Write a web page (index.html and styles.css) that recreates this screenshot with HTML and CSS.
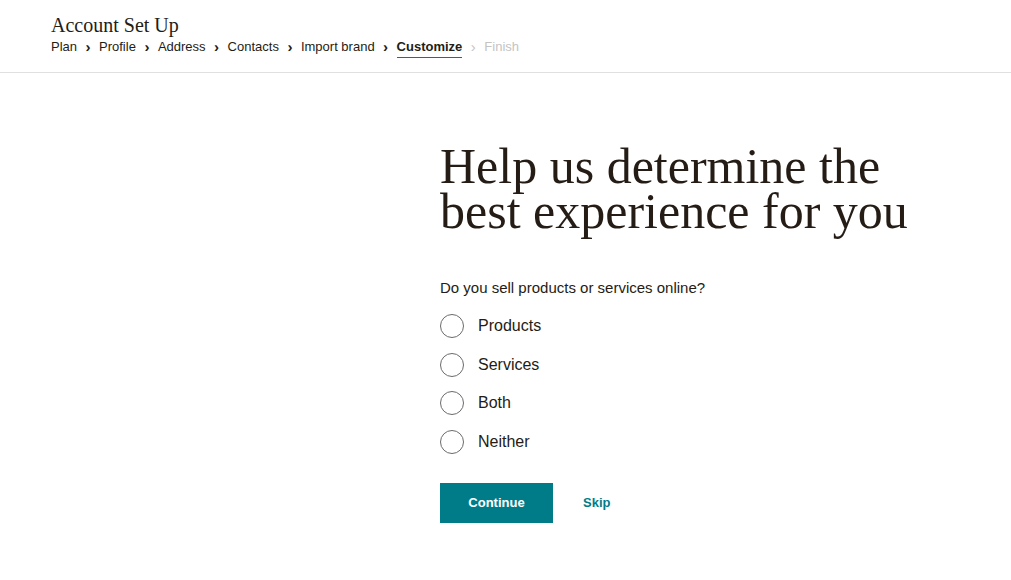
FILE: index.html
```html
<!DOCTYPE html>
<html lang="en">
<head>
  <meta charset="UTF-8">
  <title>Account Set Up</title>
  <link rel="stylesheet" href="styles.css">
</head>
<body>
  <header class="topbar">
    <div class="title">Account Set Up</div>
    <nav class="steps">
      <span class="step">Plan</span>
      <span class="sep">&#x203A;</span>
      <span class="step">Profile</span>
      <span class="sep">&#x203A;</span>
      <span class="step">Address</span>
      <span class="sep">&#x203A;</span>
      <span class="step">Contacts</span>
      <span class="sep">&#x203A;</span>
      <span class="step">Import brand</span>
      <span class="sep">&#x203A;</span>
      <span class="step current">Customize</span>
      <span class="sep dim">&#x203A;</span>
      <span class="step dim">Finish</span>
    </nav>
  </header>

  <main class="page">
    <div class="form">
      <h1>Help us determine the best experience for you</h1>
      <p class="question">Do you sell products or services online?</p>
      <div class="options">
        <label class="option"><span class="radio"></span>Products</label>
        <label class="option"><span class="radio"></span>Services</label>
        <label class="option"><span class="radio"></span>Both</label>
        <label class="option"><span class="radio"></span>Neither</label>
      </div>
      <div class="actions">
        <button class="primary">Continue</button>
        <a href="#" class="skip">Skip</a>
      </div>
    </div>
  </main>
</body>
</html>
```

FILE: styles.css
```css
body {
  margin: 0;
  font-family: 'Liberation Sans', Arial, sans-serif;
  color: #241c15;
  background: #fff;
}
.topbar {
  padding: 13px 51px 16px;
  border-bottom: 1px solid #e0e0e0;
}
.title {
  font-family: 'Liberation Serif', Georgia, serif;
  font-size: 20px;
  line-height: 24px;
}
.steps {
  display: flex;
  align-items: center;
  font-size: 13px;
  line-height: 18px;
  margin-top: 1px;
}
.step {
  color: #241c15;
}
.sep {
  font-size: 15px;
  font-weight: bold;
  margin: 0 8.5px;
  line-height: 16px;
}
.step.current {
  font-weight: bold;
  color: #241c15;
  border-bottom: 1px solid #007c89;
  padding-bottom: 1px;
  margin-bottom: -2px;
}
.dim {
  color: #c4c4c4;
}
.sep.dim {
  font-weight: normal;
}
.page {
  display: flex;
  padding-left: 440px;
}
.form {
  width: 520px;
}
h1 {
  font-family: 'Liberation Serif', Georgia, serif;
  font-weight: normal;
  font-size: 50px;
  line-height: 45px;
  margin: 71px 0 0;
  width: 500px;
}
.question {
  font-size: 15px;
  margin: 45px 0 18px;
  color: #241c15;
}
.options {
  display: flex;
  flex-direction: column;
  gap: 14.5px;
}
.option {
  display: flex;
  align-items: center;
  gap: 14px;
  font-size: 16px;
  color: #241c15;
}
.radio {
  width: 22px;
  height: 22px;
  border: 1px solid #6b6b6b;
  border-radius: 50%;
}
.actions {
  display: flex;
  align-items: center;
  gap: 30px;
  margin-top: 29px;
}
.primary {
  width: 113px;
  height: 40px;
  background: #007c89;
  color: #fff;
  border: none;
  font-family: inherit;
  font-size: 13px;
  font-weight: bold;
}
.skip {
  color: #007c89;
  text-decoration: none;
  font-size: 13px;
  font-weight: bold;
}
```
